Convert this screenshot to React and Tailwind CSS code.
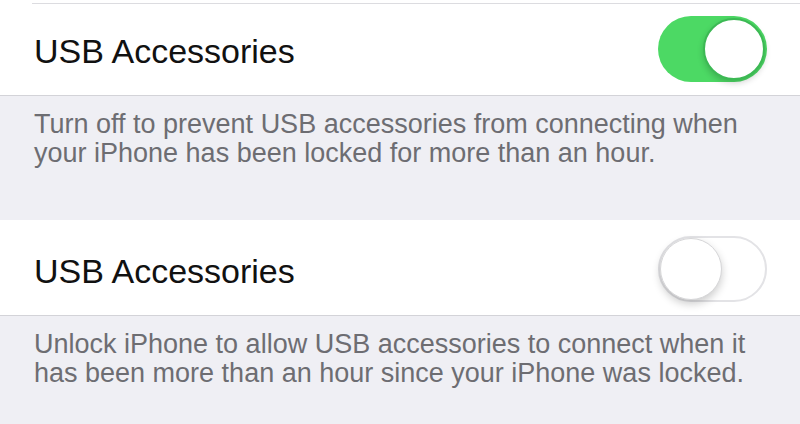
import React, { useState } from "react";

const FONT = { fontFamily: '"Liberation Sans", Arial, Helvetica, sans-serif' };

function Toggle({ on, onChange, top }) {
  return (
    <button
      onClick={() => onChange(!on)}
      className={`${top ? "mt-[12px]" : "mt-[16px]"} w-[109px] h-[66px] rounded-full flex items-center shrink-0 ${
        on ? "bg-[#4cd964] justify-end p-[2px]" : "bg-white border-2 border-[#e3e3e6] justify-start"
      }`}
    >
      <span
        className={`block w-[62px] h-[62px] rounded-full bg-white ${
          on
            ? "border-2 border-[#3cb954] shadow-[0_3px_6px_rgba(0,0,0,0.18)]"
            : "border border-[#d6d6d8] shadow-[0_4px_8px_rgba(0,0,0,0.2)]"
        }`}
      />
    </button>
  );
}

function Row({ label, on, onChange, top }) {
  return (
    <div
      className={`${top ? "h-[92px]" : "h-[96px]"} bg-white border-b border-[#d3d3d8] flex justify-between pl-[34px] pr-[33px]`}
    >
      <span className={`${top ? "pt-[31px]" : "pt-[35px]"} text-[34px] leading-[33px] text-[#111]`}>{label}</span>
      <Toggle on={on} onChange={onChange} top={top} />
    </div>
  );
}

function Footer({ children }) {
  return (
    <p className="pt-[14px] pl-[34px] pr-[40px] text-[27px] leading-[29px] text-[#6d6d72]">
      {children}
    </p>
  );
}

export default function App() {
  const [first, setFirst] = useState(true);
  const [second, setSecond] = useState(false);

  return (
    <div className="w-[800px] h-[424px] overflow-hidden bg-[#efeff4]" style={FONT}>
      <div className="bg-white pl-[32px] pt-[3px]">
        <div className="h-px bg-[#dcdce0]" />
      </div>
      <Row label="USB Accessories" on={first} onChange={setFirst} top />
      <div className="h-[124px]">
        <Footer>
          Turn off to prevent USB accessories from connecting when your iPhone has been locked for more than an hour.
        </Footer>
      </div>
      <Row label="USB Accessories" on={second} onChange={setSecond} />
      <Footer>
        Unlock iPhone to allow USB accessories to connect when it has been more than an hour since your iPhone was locked.
      </Footer>
    </div>
  );
}
